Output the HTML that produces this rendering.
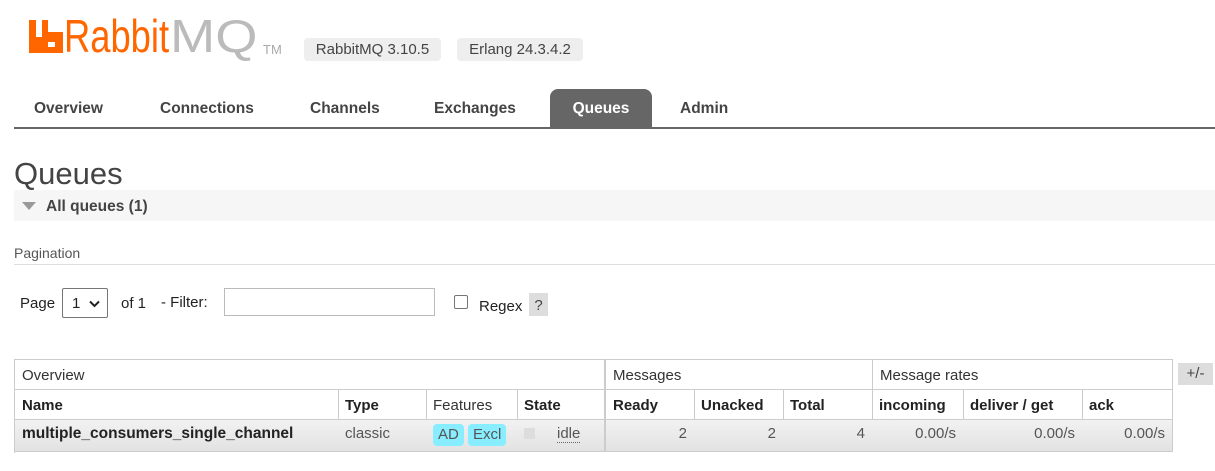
<!DOCTYPE html>
<html><head><meta charset="utf-8"><style>
*{margin:0;padding:0;box-sizing:border-box}
body{width:1215px;height:471px;background:#fff;font-family:"Liberation Sans","DejaVu Sans",sans-serif;color:#444;position:relative;overflow:hidden}
.a{position:absolute;white-space:nowrap}
.badge{background:#eee;border-radius:4px;font-size:15px;color:#444;height:23px;line-height:23px;text-align:center}
.tab{font-weight:bold;font-size:15.5px;color:#444;top:100px}
.c{position:absolute;border-right:1px solid #ccc;border-bottom:1px solid #ccc;font-size:15px;padding:0 7px;white-space:nowrap}
.h{font-weight:bold;color:#222;line-height:32px;height:30px;top:390px}
.g{line-height:32px;height:30px;top:360px;color:#333}
.d{top:420px;height:32px;line-height:28px;background:linear-gradient(#f2f2f2,#e2e2e2);color:#555}
.r{text-align:right}
</style></head><body>
<svg class="a" style="left:29px;top:20px" width="34" height="33" viewBox="0 0 34 33">
<path fill="#f60" d="M0 0H7V17H13V0H19V12H34V33H0Z"/><rect x="19" y="22" width="7" height="5" fill="#fff"/></svg>
<div class="a" style="left:64px;top:12px;font-size:46px;line-height:48px;color:#f60;transform:scaleX(0.79);transform-origin:left;">Rabbit</div>
<div class="a" style="left:170px;top:12px;font-size:46px;line-height:48px;color:#bbb;transform:scaleX(1.18);transform-origin:left;">MQ</div>
<div class="a" style="left:263px;top:42px;font-size:13px;color:#aaa">TM</div>
<div class="a badge" style="left:304px;top:38px;width:137px">RabbitMQ 3.10.5</div>
<div class="a badge" style="left:457px;top:38px;width:126px">Erlang 24.3.4.2</div>
<div class="a tab" style="left:34px">Overview</div>
<div class="a tab" style="left:160px">Connections</div>
<div class="a tab" style="left:310px">Channels</div>
<div class="a tab" style="left:434px">Exchanges</div>
<div class="a" style="left:550px;top:89px;width:102px;height:39px;background:#666;border-radius:8px 8px 0 0;color:#fff;font-weight:bold;font-size:15.5px;text-align:center;line-height:40px">Queues</div>
<div class="a tab" style="left:680px">Admin</div>
<div class="a" style="left:14px;top:127px;width:1201px;height:2px;background:#666"></div>
<div class="a" style="left:14px;top:156px;font-size:31px;color:#444">Queues</div>
<div class="a" style="left:14px;top:190px;width:1201px;height:31px;background:#f6f6f6"></div>
<div class="a" style="left:22px;top:202px;width:0;height:0;border-left:7px solid transparent;border-right:7px solid transparent;border-top:8px solid #999"></div>
<div class="a" style="left:46px;top:198px;font-weight:bold;font-size:15.5px;color:#444">All queues (1)</div>
<div class="a" style="left:14px;top:245px;font-size:14px;color:#555">Pagination</div>
<div class="a" style="left:14px;top:264px;width:1201px;height:1px;background:#ddd"></div>
<div class="a" style="left:20px;top:295px;font-size:15px;color:#222">Page</div>
<div class="a" style="left:62px;top:288px;width:46px;height:30px;border:1px solid #767676;border-radius:2px;font-size:15px;color:#222;padding:6px 0 0 9px">1
<svg style="position:absolute;left:26px;top:11px" width="11" height="8" viewBox="0 0 11 8"><path d="M1 1.5L5.5 6L10 1.5" stroke="#222" stroke-width="2" fill="none"/></svg></div>
<div class="a" style="left:121px;top:295px;font-size:15px;color:#222">of 1</div>
<div class="a" style="left:161px;top:294px;font-size:15px;color:#222">- Filter:</div>
<div class="a" style="left:224px;top:288px;width:211px;height:28px;border:1px solid #bbb"></div>
<div class="a" style="left:454px;top:295px;width:14px;height:14px;border:1px solid #767676;border-radius:2px"></div>
<div class="a" style="left:479px;top:298px;font-size:15px;color:#222">Regex</div>
<div class="a" style="left:529px;top:293px;width:19px;height:23px;background:#ddd;font-size:15px;text-align:center;line-height:25px;color:#444">?</div>
<div class="a" style="left:14px;top:359px;width:1159px;height:94px;border-left:1px solid #ccc;border-top:1px solid #ccc"></div>
<div class="c g" style="left:15px;width:591px;border-right:2px solid #ccc">Overview</div>
<div class="c g" style="left:606px;width:267px">Messages</div>
<div class="c g" style="left:873px;width:300px">Message rates</div>
<div class="c h" style="left:15px;width:324px">Name</div>
<div class="c h" style="left:338px;width:89px">Type</div>
<div class="c h" style="left:426px;width:92px;font-weight:normal;color:#333">Features</div>
<div class="c h" style="left:517px;width:89px;border-right:2px solid #ccc">State</div>
<div class="c h" style="left:606px;width:89px">Ready</div>
<div class="c h" style="left:694px;width:90px">Unacked</div>
<div class="c h" style="left:783px;width:90px">Total</div>
<div class="c h" style="left:872px;width:92px">incoming</div>
<div class="c h" style="left:963px;width:120px">deliver / get</div>
<div class="c h" style="left:1082px;width:91px">ack</div>
<div class="c d" style="left:15px;width:324px;font-weight:bold;color:#222;font-size:15.5px">multiple_consumers_single_channel</div>
<div class="c d" style="left:338px;width:89px">classic</div>
<div class="c d" style="left:426px;width:92px"><span style="display:inline-block;margin-top:4px;background:#8ef;border-radius:4px;padding:0 5px;line-height:22px">AD</span> <span style="display:inline-block;background:#8ef;border-radius:4px;padding:0 5px;line-height:22px">Excl</span></div>
<div class="c d" style="left:517px;width:89px;border-right:2px solid #ccc"><span style="display:inline-block;width:11px;height:11px;background:#ddd;vertical-align:-1px"></span><span style="margin-left:22px;border-bottom:1px dotted #666;line-height:16px">idle</span></div>
<div class="c d r" style="left:606px;width:89px">2</div>
<div class="c d r" style="left:694px;width:90px">2</div>
<div class="c d r" style="left:783px;width:90px">4</div>
<div class="c d r" style="left:872px;width:92px">0.00/s</div>
<div class="c d r" style="left:963px;width:120px">0.00/s</div>
<div class="c d r" style="left:1082px;width:91px">0.00/s</div>
<div class="a" style="left:1178px;top:363px;width:35px;height:22px;background:#ddd;font-size:15px;text-align:center;line-height:22px;color:#444">+/-</div>
</body></html>
